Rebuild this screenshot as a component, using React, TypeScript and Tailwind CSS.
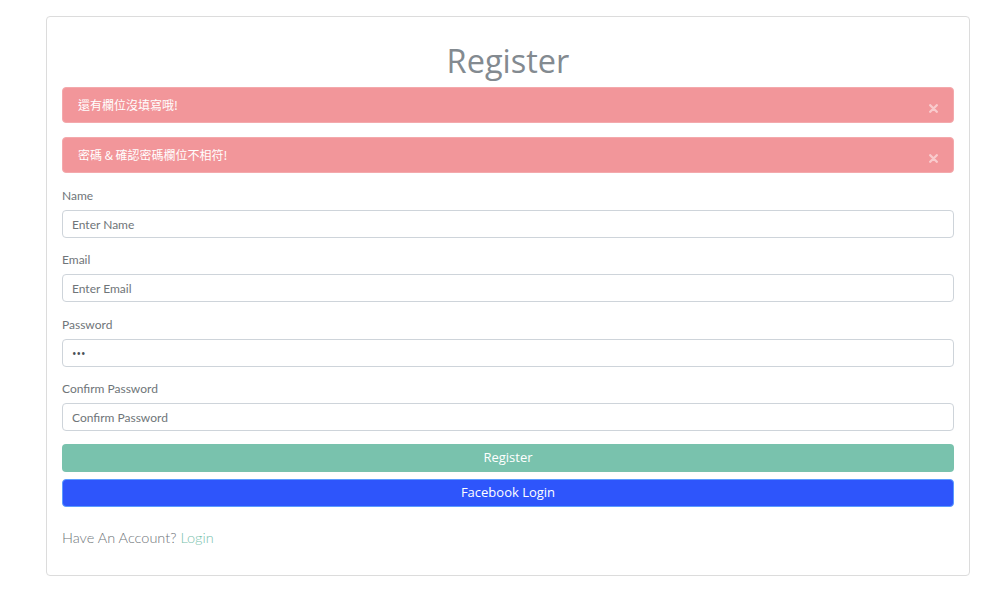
import React, { useState } from "react";

const alerts = ["還有欄位沒填寫哦!", "密碼 & 確認密碼欄位不相符!"];

const fields = [
  { label: "Name", type: "text", placeholder: "Enter Name", value: "", gap: "" },
  { label: "Email", type: "email", placeholder: "Enter Email", value: "", gap: "mt-[14px]" },
  { label: "Password", type: "password", placeholder: "Password", value: "abc", gap: "mt-[15px]" },
  { label: "Confirm Password", type: "password", placeholder: "Confirm Password", value: "", gap: "mt-[14px]" },
];

export default function App() {
  const [shown, setShown] = useState(alerts);
  const [values, setValues] = useState(fields.map((f) => f.value));

  return (
    <div className="min-h-[595px] bg-white font-['Lato','Open_Sans',sans-serif]">
      <div className="ml-[46px] pt-[16px] w-[924px]">
        <div className="border border-[#dcdcdc] rounded-[4px] px-[15px] pt-[24px] pb-[27px]">
          <h1 className="h-[40px] leading-[40px] text-center text-[32.5px] text-[#838a90] font-['Open_Sans',sans-serif]">
            Register
          </h1>

          <div className="mt-[6px] flex flex-col gap-[14px]">
            {shown.map((msg) => (
              <div
                key={msg}
                className="h-[36px] flex items-center justify-between rounded-[4px] border border-[#f4a9ac] bg-[#f2969a] pl-[15px] pr-[15px]"
              >
                <span className="text-[12px] text-white font-['Noto_Sans_CJK_TC',sans-serif]">{msg}</span>
                <button
                  type="button"
                  onClick={() => setShown((prev) => prev.filter((m) => m !== msg))}
                  className="mt-[6px] cursor-pointer"
                >
                  <svg width="9" height="9" viewBox="0 0 9 9">
                    <path d="M1.2 1.2 L7.8 7.8 M7.8 1.2 L1.2 7.8" stroke="#f9cbcd" strokeWidth="2.3" strokeLinecap="round" />
                  </svg>
                </button>
              </div>
            ))}
          </div>

          <form onSubmit={(e) => e.preventDefault()} className="mt-[15px]">
            {fields.map((f, i) => (
              <div key={f.label} className={f.gap}>
                <label className="block h-[16px] leading-[16px] text-[12px] text-[#6f7579]">{f.label}</label>
                <input
                  type={f.type}
                  placeholder={f.placeholder}
                  value={values[i]}
                  onChange={(e) => setValues((prev) => prev.map((v, j) => (j === i ? e.target.value : v)))}
                  className={
                    "mt-[6px] block w-full h-[28px] rounded-[4px] border border-[#ced4da] px-[9px] text-[12px] text-[#495057] placeholder-[#6f7579] outline-none " +
                    (f.type === "password" && f.value ? "font-['Open_Sans',sans-serif]" : "")
                  }
                />
              </div>
            ))}

            <button
              type="submit"
              className="mt-[13px] block w-full h-[28px] rounded-[4px] bg-[#79c2ad] text-[13px] text-white font-['Open_Sans',sans-serif]"
            >
              Register
            </button>
            <button
              type="button"
              className="mt-[7px] block w-full h-[28px] rounded-[4px] border border-[#5b9cff] bg-[#2e55fb] text-[13px] text-white font-['Open_Sans',sans-serif]"
            >
              Facebook Login
            </button>
          </form>

          <p className="mt-[21px] text-[14.5px] leading-[20px] font-light text-[#6f7579]">
            Have An Account? <a href="#" className="text-[#79c2ad]">Login</a>
          </p>
        </div>
      </div>
    </div>
  );
}
